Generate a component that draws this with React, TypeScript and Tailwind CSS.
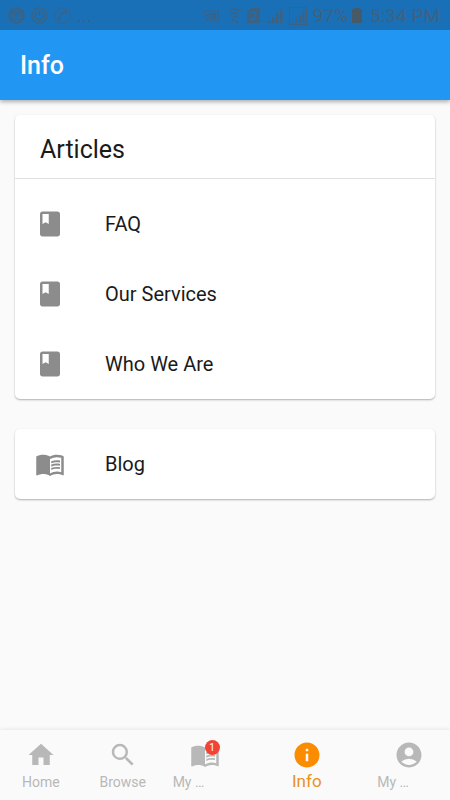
import type { ComponentType, ReactNode } from "react";
import { MdAccountCircle, MdClass, MdHome, MdInfo, MdMenuBook, MdSearch } from "react-icons/md";

type Icon = ComponentType<{ className?: string }>;

const articles = ["FAQ", "Our Services", "Who We Are"];

const tabs: { label: string; icon: Icon; active?: boolean; badge?: number; cut?: boolean }[] = [
  { label: "Home", icon: MdHome },
  { label: "Browse", icon: MdSearch },
  { label: "My …", icon: MdMenuBook, badge: 1, cut: true },
  { label: "Info", icon: MdInfo, active: true },
  { label: "My …", icon: MdAccountCircle, cut: true },
];

function StatusBar() {
  return (
    <div className="flex h-[30px] items-center justify-between bg-[#1a70b7] pl-2 pr-[10px] pt-px text-[19px] leading-none text-[#3f6180]">
      <div className="flex items-center gap-[6px]">
        {/* Notifications */}
        <svg viewBox="0 0 17 17" className="size-[17px]" fill="none" stroke="currentColor">
          <circle cx="8.5" cy="8.5" r="7.4" strokeWidth="1.8" />
          <path d="M2.5 4.5h12v2h-12zM2.5 12.5h12" strokeWidth="1.6" />
          <path d="M3.5 7v3.500M6.800 7v3.500M10.200 7v3.500M13.500 7v3.500" strokeWidth="1.6" />
        </svg>
        <svg viewBox="0 0 17 17" className="size-[17px]" fill="none" stroke="currentColor">
          <circle cx="8.5" cy="8.5" r="7.6" strokeWidth="1.2" />
          <path d="M5.500 5.400a4.300 4.300 0 1 0 6 0" strokeWidth="1.6" />
          <path d="M8.500 3.500v5.500" strokeWidth="1.6" />
        </svg>
        <svg viewBox="0 0 17 17" className="size-[17px]" fill="none" stroke="currentColor">
          <circle cx="8.5" cy="8.5" r="7.7" strokeWidth="0.9" />
          <path d="M5 12.500C5 8.500 8.500 5 12.500 5" strokeWidth="1.300" />
          <path d="M3.800 11.200l2.700 2M11.200 3.800l2 2.700" strokeWidth="2.200" />
        </svg>
        <span>...</span>
      </div>

      <div className="flex items-center">
        <svg viewBox="0 0 16 12" className="h-3 w-4" fill="none" stroke="currentColor" strokeWidth="1.2">
          <path d="M1 2.500V1h14v10H9.500M1 4.500q6.500 0 6.500 6.500M1 7.500q3.500 0 3.500 3.500" />
          <path d="M4 3h9v6H9.500Q8 4.500 4 3z" fill="currentColor" stroke="none" />
        </svg>
        <svg viewBox="0 0 14 18" className="ml-[9px] h-[18px] w-[14px]" fill="none" stroke="currentColor" strokeWidth="1.3">
          <path d="M1 4.500q6-5 12 0M3 7.500q4-3.500 8 0M5 10q2-2 4 0" />
          <path d="M3 14l2-2.500L7 14zM7 14l2 2.500L11 14z" fill="currentColor" stroke="none" />
        </svg>
        <svg viewBox="0 0 13 15" className="ml-[5px] h-[15px] w-[13px]">
          <path d="M4 0h8q1 0 1 1v13q0 1-1 1H1q-1 0-1-1V4z" fill="currentColor" />
          <path d="M4 6q0-2 2.500-2T9 6q0 1.500-5 5.500h5.500" fill="none" stroke="#1a70b7" strokeWidth="1.6" />
        </svg>
        <svg viewBox="0 0 15 15" className="ml-2 size-[15px]" fill="currentColor">
          <path d="M0 13h2.500v2H0zM4 9.500h2.500V15H4zM8 6h2.500v9H8zM12 1h2.500v14H12z" />
        </svg>
        <svg viewBox="0 0 18 18" className="ml-[6px] size-[18px]" fill="currentColor">
          <path d="M.5.5h17v17H.5z" fill="none" stroke="currentColor" />
          <path d="M3 14h2v1.500H3zM6.500 11.500h2v4h-2zM10 8.500h2v7h-2zM13.500 4h2v11.500h-2z" />
        </svg>
        <span className="ml-[6px]">97%</span>
        <svg viewBox="0 0 10 15" className="ml-1 h-[15px] w-[10px]" fill="#475a68">
          <path d="M2 0h6v1h2v14H0V1h2z" />
        </svg>
        <span className="ml-2">5:34 PM</span>
      </div>
    </div>
  );
}

function Card({ children }: { children: ReactNode }) {
  return (
    <section className="rounded-[5px] bg-white shadow-[0_1px_2px_rgba(0,0,0,0.3)]">{children}</section>
  );
}

function Row({ label, icon: Icon }: { label: string; icon: Icon }) {
  return (
    <a href="#" className="flex h-[70px] items-center gap-10 px-5 text-[20px]">
      <Icon className="size-[30px] text-[#8c8c8c]" />
      {label}
    </a>
  );
}

export default function App() {
  return (
    <div className="flex min-h-screen flex-col bg-[#fafafa] font-['Roboto',sans-serif] text-[#1a1a1a]">
      <header className="bg-[#2196f3] shadow-[0_2px_4px_rgba(0,0,0,0.3)]">
        <StatusBar />
        <h1 className="flex h-[70px] items-center px-5 pt-[2px] text-[25px] font-medium text-white">Info</h1>
      </header>

      <main className="flex flex-1 flex-col gap-[30px] px-[15px] py-[15px]">
        <Card>
          <h2 className="flex h-16 items-center border-b border-[#e0e0e0] px-[25px] pt-[6px] text-[25px]">Articles</h2>
          <div className="pt-[10px]">
            {articles.map((title) => (
              <Row key={title} label={title} icon={MdClass} />
            ))}
          </div>
        </Card>
        <Card>
          <Row label="Blog" icon={MdMenuBook} />
        </Card>
      </main>

      {/* Bottom navigation, the active tab is half as wide again */}
      <nav className="flex h-[70px] bg-[#fafafa] shadow-[0_-1px_4px_rgba(0,0,0,0.08)]">
        {tabs.map(({ label, icon: Icon, active, badge, cut }, i) => (
          <a
            key={i}
            href="#"
            className={`flex min-w-0 flex-col items-center pt-[10px] ${active ? "flex-[3] text-[#fb8c00]" : "flex-[2] text-[#b8b8b8]"}`}
          >
            <span className="relative">
              <Icon className="size-[30px]" />
              {badge && (
                <span className="absolute right-0 top-0 flex size-[15px] items-center justify-center rounded-full bg-[#f44336] text-[10px] text-white">
                  {badge}
                </span>
              )}
            </span>
            <span
              className={`w-full leading-[22px] ${active ? "text-[17px] text-[#e8921c]" : "pt-px text-[14px]"} ${cut ? "pl-[9px] text-left" : "text-center"}`}
            >
              {label}
            </span>
          </a>
        ))}
      </nav>
    </div>
  );
}
